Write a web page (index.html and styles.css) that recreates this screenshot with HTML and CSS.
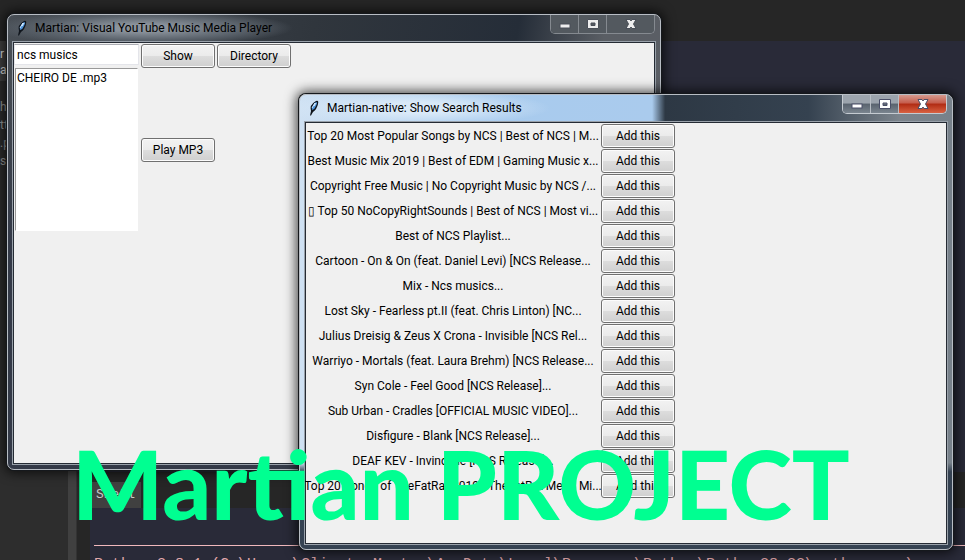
FILE: index.html
```
<!DOCTYPE html>
<html lang="en">
<head>
<meta charset="utf-8">
<title>Martian PROJECT</title>
<link rel="stylesheet" href="styles.css">
</head>
<body>
<main class="desktop">
  <div class="editor">
    <aside class="sidebar">
      <div class="side-head"><span>r</span><span>ar</span></div>
      <div class="side-files"><span>h</span><span>tt</span><span>.p</span><span>ss</span></div>
    </aside>
    <div class="splitter"></div>
    <section class="pane">
      <div class="code"></div>
      <div class="tabs"><span class="tab">Shell</span></div>
      <div class="shell"><hr><p>Python 3.8.1 (C:\Users\Cliente Master\AppData\Local\Programs\Python\Python38-32\python.exe)</p></div>
    </section>
  </div>

  <section class="window window-main">
    <header class="titlebar">
      <svg class="feather" viewBox="0 0 16 16"><path d="M4 15.500L5 11Q3 5 10 1Q13 0 12 4Q11 9 7 12L5 15.500Z" fill="#10151c"/><path d="M6 10Q5 6 10 2Q12 2 10 6Q9 9 6 10" fill="#4d92d8"/><path d="M6 8L9 3L8 6L10 3" fill="none" stroke="#c9e5ff"/></svg>
      <h1 class="title">Martian: Visual YouTube Music Media Player</h1>
      <div class="controls">
        <button class="ctl" aria-label="Minimize"><svg viewBox="0 0 14 12"><rect x="2" y="6" width="10" height="4" fill="#eee" stroke="#4a4f58"/></svg></button>
        <button class="ctl" aria-label="Maximize"><svg viewBox="0 0 14 12"><path d="M1.500 1.500H12.500V10.500H1.500ZM5 5V7.500H9V5Z" fill="#eee" fill-rule="evenodd" stroke="#4a4f58"/></svg></button>
        <button class="ctl close" aria-label="Close"><svg viewBox="0 0 14 12"><path d="M2 1.500H6L7 3L8 1.500H12L9.500 6L12 10.500H8L7 9L6 10.500H2L4.500 6Z" fill="#eee" stroke="#4a4f58"/></svg></button>
      </div>
    </header>
    <div class="client player">
      <div class="left">
        <input class="search" type="text" value="ncs musics" aria-label="Search">
        <ul class="list"><li>CHEIRO DE .mp3</li></ul>
      </div>
      <div class="actions">
        <div class="row"><button class="btn">Show</button><button class="btn">Directory</button></div>
        <button class="btn">Play MP3</button>
      </div>
    </div>
  </section>

  <section class="window window-results">
    <header class="titlebar">
      <svg class="feather" viewBox="0 0 16 16"><path d="M4 15.500L5 11Q3 5 10 1Q13 0 12 4Q11 9 7 12L5 15.500Z" fill="#10151c"/><path d="M6 10Q5 6 10 2Q12 2 10 6Q9 9 6 10" fill="#4d92d8"/><path d="M6 8L9 3L8 6L10 3" fill="none" stroke="#c9e5ff"/></svg>
      <h2 class="title">Martian-native: Show Search Results</h2>
      <div class="controls">
        <button class="ctl" aria-label="Minimize"><svg viewBox="0 0 14 12"><rect x="2" y="6" width="10" height="4" fill="#fff" stroke="#4a4f68"/></svg></button>
        <button class="ctl" aria-label="Maximize"><svg viewBox="0 0 14 12"><path d="M1.500 1.500H12.500V10.500H1.500ZM5 5V7.500H9V5Z" fill="#fff" fill-rule="evenodd" stroke="#4a4f68"/></svg></button>
        <button class="ctl close" aria-label="Close"><svg viewBox="0 0 14 12"><path d="M2 1.500H6L7 3L8 1.500H12L9.500 6L12 10.500H8L7 9L6 10.500H2L4.500 6Z" fill="#fff" stroke="#4a4f68"/></svg></button>
      </div>
    </header>
    <div class="client">
      <ul class="results">
        <li><span>Top 20 Most Popular Songs by NCS | Best of NCS | M...</span><button class="btn">Add this</button></li>
        <li><span>Best Music Mix 2019 | Best of EDM | Gaming Music x...</span><button class="btn">Add this</button></li>
        <li><span>Copyright Free Music | No Copyright Music by NCS /...</span><button class="btn">Add this</button></li>
        <li><span>▯ Top 50 NoCopyRightSounds | Best of NCS | Most vi...</span><button class="btn">Add this</button></li>
        <li><span>Best of NCS Playlist...</span><button class="btn">Add this</button></li>
        <li><span>Cartoon - On &amp; On (feat. Daniel Levi) [NCS Release...</span><button class="btn">Add this</button></li>
        <li><span>Mix - Ncs musics...</span><button class="btn">Add this</button></li>
        <li><span>Lost Sky - Fearless pt.II (feat. Chris Linton) [NC...</span><button class="btn">Add this</button></li>
        <li><span>Julius Dreisig &amp; Zeus X Crona - Invisible [NCS Rel...</span><button class="btn">Add this</button></li>
        <li><span>Warriyo - Mortals (feat. Laura Brehm) [NCS Release...</span><button class="btn">Add this</button></li>
        <li><span>Syn Cole - Feel Good [NCS Release]...</span><button class="btn">Add this</button></li>
        <li><span>Sub Urban - Cradles [OFFICIAL MUSIC VIDEO]...</span><button class="btn">Add this</button></li>
        <li><span>Disfigure - Blank [NCS Release]...</span><button class="btn">Add this</button></li>
        <li><span>DEAF KEV - Invincible [NCS Release]...</span><button class="btn">Add this</button></li>
        <li><span>Top 20 Songs of TheFatRat 2019 - TheFatRat Mega Mi...</span><button class="btn">Add this</button></li>
      </ul>
    </div>
  </section>

  <p class="banner">Martian PROJECT</p>
</main>
</body>
</html>
```
FILE: styles.css
```
* { box-sizing: border-box; }
body { margin: 0; font: 12px/16px Roboto, "Noto Sans", sans-serif; color: #000; background: #262626; }
h1, h2, p, ul { margin: 0; padding: 0; font: inherit; list-style: none; }
.desktop { position: relative; height: 100vh; overflow: hidden; }

.editor { display: flex; height: 100%; padding-top: 41px; color: #9a9a9a; }
.sidebar { width: 68px; background: #2d2d2d; }
.side-head { display: flex; flex-direction: column; width: 8px; height: 40px; padding-top: 5px; background: #404040; color: #ddd; }
.side-files { display: flex; flex-direction: column; gap: 2px; width: 8px; padding-top: 18px; }
.splitter { width: 9px; background: #404040; border-right: 1px solid #333; }
.pane { display: flex; flex: 1; flex-direction: column; min-width: 0; padding-left: 13px; background: #262626; }
.code { flex: 1; margin-left: -13px; background: #292a38; }
.tabs { display: flex; height: 36px; padding-top: 10px; }
.tab { padding: 5px 6px; background: #404040; color: #c8c8c8; font: 13px/16px "Liberation Mono", monospace; }
.shell { height: 52px; padding: 37px 0 0 4px; background: #292a38; overflow: hidden; }
.shell hr { margin: 0 0 10px; border: 0; border-top: 1px solid #f0b8bc; }
.shell p { color: #e0a8ac; font: 15px/18px "Liberation Mono", monospace; white-space: nowrap; }

.window { position: absolute; display: flex; flex-direction: column; width: 654px; height: 456px; padding: 0 5px 5px; border: 1px solid #b8bdc4; border-radius: 7px; box-shadow: 0 0 0 1px #15181c, 0 0 12px 3px rgba(0, 0, 0, .7); }
.window-main { left: 7px; top: 14px; background: radial-gradient(ellipse 150px 18px at 135px 13px, #8b939c 20%, #5c646d 65%, transparent), linear-gradient(transparent 15%, #343a48 50%), linear-gradient(100deg, #484e55 0, #30363d 42%, #252d38 70%, #5a5e64 82%, #5a5e66 100%); }
.window-results { left: 299px; top: 94px; background: radial-gradient(ellipse 135px 18px at 115px 13px, #d9e9f8 30%, transparent), linear-gradient(transparent 81%, #354252 83%), linear-gradient(90deg, #cfe1f3 0, #a8cbee 25%, #aacbed 54%, #2d3844 56%, #354250 78%, #7c848c 92%, #77818a 100%); }
.titlebar { display: flex; align-items: flex-start; height: 27px; }
.feather { width: 16px; height: 16px; margin: 5px 5px 0 1px; }
.title { flex: 1; padding-top: 5px; }
.controls { display: flex; border: 1px solid #c5cbd1; border-top: 0; border-radius: 0 0 5px 5px; overflow: hidden; }
.ctl { display: flex; align-items: center; justify-content: center; width: 28px; height: 18px; padding: 0; border: 0; border-right: 1px solid #b8bec5; background: linear-gradient(#9ca4ad 0 45%, #59636e 50%, #7b858f); }
.ctl svg { width: 14px; height: 12px; }
.close { width: 47px; border-right: 0; }
.window-results .close { background: linear-gradient(#d59a8f, #c55c4b 45%, #b02b13 50%, #d96242); }
.window-main .controls { border-color: #858a90; }
.window-main .ctl { border-color: #858a90; background: #53595f; }
.client { flex: 1; border: 1px solid #252b34; outline: 1px solid #99a1aa; background: #f0f0f0; }

.player { display: flex; gap: 2px; padding: 1px 0; }
.left { width: 125px; }
.search { display: block; width: 125px; height: 21px; padding: 0 2px; border: 1px solid #e4e5ea; border-top-color: #abadb3; background: #fff; font: inherit; }
.list { width: 123px; height: 163px; margin: 3px 0 0 1px; padding: 1px; border: 1px solid #fff; border-top-color: #999; border-left-color: #999; background: #fff; }
.actions { display: flex; flex-direction: column; gap: 70px; }
.row { display: flex; gap: 2px; }
.btn { width: 74px; height: 24px; padding: 0; border: 1px solid #707070; border-radius: 3px; box-shadow: inset 0 0 0 1px #fcfcfc; background: linear-gradient(#f2f2f2, #ebebeb 50%, #dddddd 50%, #cfcfcf); font: inherit; color: #000; }

.results { padding: 1px; }
.results li { display: grid; grid-template-columns: 292px 74px; gap: 2px; height: 25px; }
.results span { display: flex; justify-content: center; line-height: 24px; white-space: pre; }
.banner { position: absolute; left: 72px; top: 427px; color: #00ff91; font: 900 96px/112px Lato, sans-serif; white-space: nowrap; }
```
